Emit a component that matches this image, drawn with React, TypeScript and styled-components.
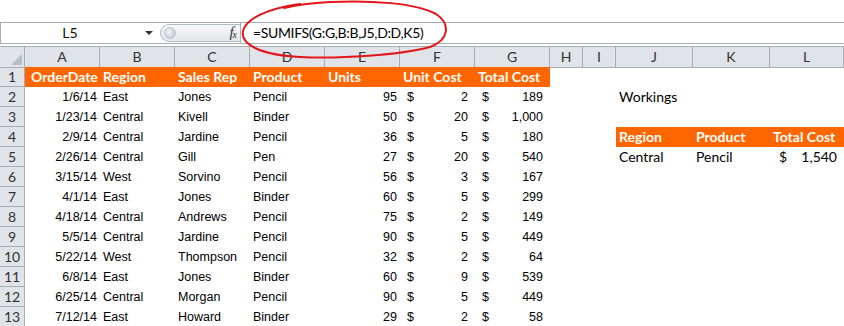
import React from "react";
import styled, { createGlobalStyle } from "styled-components";

const GlobalStyle = createGlobalStyle`
  html, body { margin: 0; padding: 0; background: #fff; }
  #root { width: 844px; height: 326px; }
`;

const CAL = `"Lato", "Noto Sans", sans-serif`;
const ARIAL = `"Liberation Sans", Arial, sans-serif`;
const ORANGE = "#ff6600";
const LINE = "#a7aeb6";
const HEAD_BG = "#e0e4e9";
const GRID_COLS = "25px 75px 75px 75px 75px 75px 75px 75px 33px 33px 77px 77px 1fr";

const Page = styled.div`
  position: relative;
  width: 844px;
  height: 326px;
  overflow: hidden;
  background: #fff;
  display: flex;
  flex-direction: column;
`;

const TopSpace = styled.div`
  flex: none;
  height: 22px;
`;

const FormulaBar = styled.div`
  flex: none;
  height: 22px;
  box-sizing: border-box;
  display: flex;
  border-top: 1px solid ${LINE};
  border-bottom: 1px solid ${LINE};
  background: #fff;
`;

const NameBox = styled.div`
  width: 160px;
  box-sizing: border-box;
  border-left: 1px solid ${LINE};
  display: flex;
  align-items: center;
`;

const NameText = styled.div`
  flex: 1;
  text-align: center;
  font: 14px ${CAL};
  color: #111;
  line-height: 20px;
`;

const DropArrow = styled.div`
  width: 0;
  height: 0;
  border-left: 4px solid transparent;
  border-right: 4px solid transparent;
  border-top: 4px solid #333;
  margin: 0 7px 0 6px;
`;

const FxArea = styled.div`
  width: 80px;
  box-sizing: border-box;
  margin: 1px 0 1px 0;
  border: 1px solid #b4bac2;
  border-right: none;
  border-radius: 10px 0 0 10px;
  background: linear-gradient(#f5f6f8, #e4e7eb);
  display: flex;
  align-items: center;
  justify-content: space-between;
  padding: 0 4px 0 3px;
`;

const Handle = styled.div`
  width: 10px;
  height: 10px;
  border-radius: 50%;
  background: radial-gradient(circle at 40% 40%, #f4f5f7 0%, #c8cdd3 70%, #aab0b8 100%);
  border: 1px solid #c3c8ce;
`;

const Fx = styled.div`
  font: italic 15px "Liberation Serif", "DejaVu Serif", serif;
  color: #333;
  line-height: 18px;
  letter-spacing: -1px;
  span {
    font-size: 10px;
    vertical-align: -1px;
  }
`;

const FormulaInput = styled.div`
  flex: 1;
  border-left: 1px solid ${LINE};
  padding-left: 12px;
  font: 14px ${CAL};
  letter-spacing: -0.35px;
  line-height: 20px;
  color: #000;
`;

const Gap = styled.div`
  flex: none;
  height: 2px;
`;

const HeaderRow = styled.div`
  flex: none;
  display: grid;
  grid-template-columns: ${GRID_COLS};
  height: 21px;
  box-sizing: border-box;
  border-top: 1px solid ${LINE};
`;

const ColHead = styled.div`
  background: ${HEAD_BG};
  border-right: 1px solid ${LINE};
  border-bottom: 1px solid ${LINE};
  text-align: center;
  font: 14px ${CAL};
  color: #333;
  line-height: 20px;
`;

const Corner = styled(ColHead)`
  position: relative;
  svg {
    position: absolute;
    right: 2px;
    bottom: 2px;
  }
`;

const Row = styled.div`
  flex: none;
  display: grid;
  grid-template-columns: ${GRID_COLS};
  height: 20px;
`;

const RowHead = styled.div`
  background: ${HEAD_BG};
  border-right: 1px solid ${LINE};
  border-bottom: 1px solid ${LINE};
  text-align: center;
  font: 14px ${CAL};
  color: #333;
  line-height: 19px;
`;

type CellProps = {
  $align?: "left" | "right";
  $orange?: boolean;
  $cal?: boolean;
  $pl?: number;
  $pr?: number;
};

const Cell = styled.div<CellProps>`
  background: ${(p) => (p.$orange ? ORANGE : "transparent")};
  color: ${(p) => (p.$orange ? "#fff" : "#000")};
  font-family: ${(p) => (p.$orange || p.$cal ? CAL : ARIAL)};
  font-size: ${(p) => (p.$orange || p.$cal ? "14px" : "12.5px")};
  font-weight: ${(p) => (p.$orange ? 700 : 400)};
  text-align: ${(p) => p.$align ?? "left"};
  padding-left: ${(p) => p.$pl ?? 3}px;
  padding-right: ${(p) => p.$pr ?? 3}px;
  line-height: 20px;
  white-space: nowrap;
  overflow: visible;
`;

const AcctCell = styled.div<{ $cal?: boolean; $pl?: number }>`
  display: flex;
  justify-content: space-between;
  padding: 0 7px 0 ${(p) => p.$pl ?? 7}px;
  font-family: ${(p) => (p.$cal ? CAL : ARIAL)};
  font-size: ${(p) => (p.$cal ? "14px" : "12.5px")};
  line-height: 20px;
  color: #000;
`;

const Ellipse = styled.svg`
  position: absolute;
  left: 0;
  top: 0;
  pointer-events: none;
`;

const rows: [string, string, string, string, string, string, string][] = [
  ["1/6/14", "East", "Jones", "Pencil", "95", "2", "189"],
  ["1/23/14", "Central", "Kivell", "Binder", "50", "20", "1,000"],
  ["2/9/14", "Central", "Jardine", "Pencil", "36", "5", "180"],
  ["2/26/14", "Central", "Gill", "Pen", "27", "20", "540"],
  ["3/15/14", "West", "Sorvino", "Pencil", "56", "3", "167"],
  ["4/1/14", "East", "Jones", "Binder", "60", "5", "299"],
  ["4/18/14", "Central", "Andrews", "Pencil", "75", "2", "149"],
  ["5/5/14", "Central", "Jardine", "Pencil", "90", "5", "449"],
  ["5/22/14", "West", "Thompson", "Pencil", "32", "2", "64"],
  ["6/8/14", "East", "Jones", "Binder", "60", "9", "539"],
  ["6/25/14", "Central", "Morgan", "Pencil", "90", "5", "449"],
  ["7/12/14", "East", "Howard", "Binder", "29", "2", "58"],
];

const cols = ["A", "B", "C", "D", "E", "F", "G", "H", "I", "J", "K", "L"];

function Workings({ r }: { r: number }) {
  if (r === 2)
    return (
      <>
        <Cell $cal>Workings</Cell>
        <Cell />
        <Cell />
      </>
    );
  if (r === 4)
    return (
      <>
        <Cell $orange>Region</Cell>
        <Cell $orange>Product</Cell>
        <Cell $orange>Total Cost</Cell>
      </>
    );
  if (r === 5)
    return (
      <>
        <Cell $cal>Central</Cell>
        <Cell $cal>Pencil</Cell>
        <AcctCell $cal $pl={9}>
          <span>$</span>
          <span>1,540</span>
        </AcctCell>
      </>
    );
  return (
    <>
      <Cell />
      <Cell />
      <Cell />
    </>
  );
}

export default function App() {
  return (
    <Page>
      <GlobalStyle />
      <TopSpace />
      <FormulaBar>
        <NameBox>
          <NameText>L5</NameText>
          <DropArrow />
        </NameBox>
        <FxArea>
          <Handle />
          <Fx>
            f<span>x</span>
          </Fx>
        </FxArea>
        <FormulaInput>=SUMIFS(G:G,B:B,J5,D:D,K5)</FormulaInput>
      </FormulaBar>
      <Gap />
      <HeaderRow>
        <Corner>
          <svg width="11" height="11" viewBox="0 0 11 11">
            <polygon points="11,0 11,11 0,11" fill="#b7bec6" />
          </svg>
        </Corner>
        {cols.map((c) => (
          <ColHead key={c}>{c}</ColHead>
        ))}
      </HeaderRow>
      <Row>
        <RowHead>1</RowHead>
        <Cell $orange $pl={6}>OrderDate</Cell>
        <Cell $orange>Region</Cell>
        <Cell $orange>Sales Rep</Cell>
        <Cell $orange>Product</Cell>
        <Cell $orange>Units</Cell>
        <Cell $orange>Unit Cost</Cell>
        <Cell $orange>Total Cost</Cell>
        <Cell />
        <Cell />
        <Cell />
        <Cell />
        <Cell />
      </Row>
      {rows.map((d, i) => {
        const r = i + 2;
        return (
          <Row key={r}>
            <RowHead>{r}</RowHead>
            <Cell $align="right">{d[0]}</Cell>
            <Cell>{d[1]}</Cell>
            <Cell>{d[2]}</Cell>
            <Cell>{d[3]}</Cell>
            <Cell $align="right">{d[4]}</Cell>
            <AcctCell>
              <span>$</span>
              <span>{d[5]}</span>
            </AcctCell>
            <AcctCell>
              <span>$</span>
              <span>{d[6]}</span>
            </AcctCell>
            <Cell />
            <Cell />
            <Workings r={r} />
          </Row>
        );
      })}
      <Ellipse width="844" height="326" viewBox="0 0 844 326">
        <path
          d="M 300 4 C 270 8, 246 18, 243 31 C 240 45, 262 55, 300 57 C 340 59, 400 55, 430 47 C 449 40, 451 24, 436 14 C 416 3, 370 0, 330 2 C 312 3, 296 5, 284 8"
          fill="none"
          stroke="#e3161c"
          strokeWidth="2"
          strokeLinecap="round"
        />
      </Ellipse>
    </Page>
  );
}
